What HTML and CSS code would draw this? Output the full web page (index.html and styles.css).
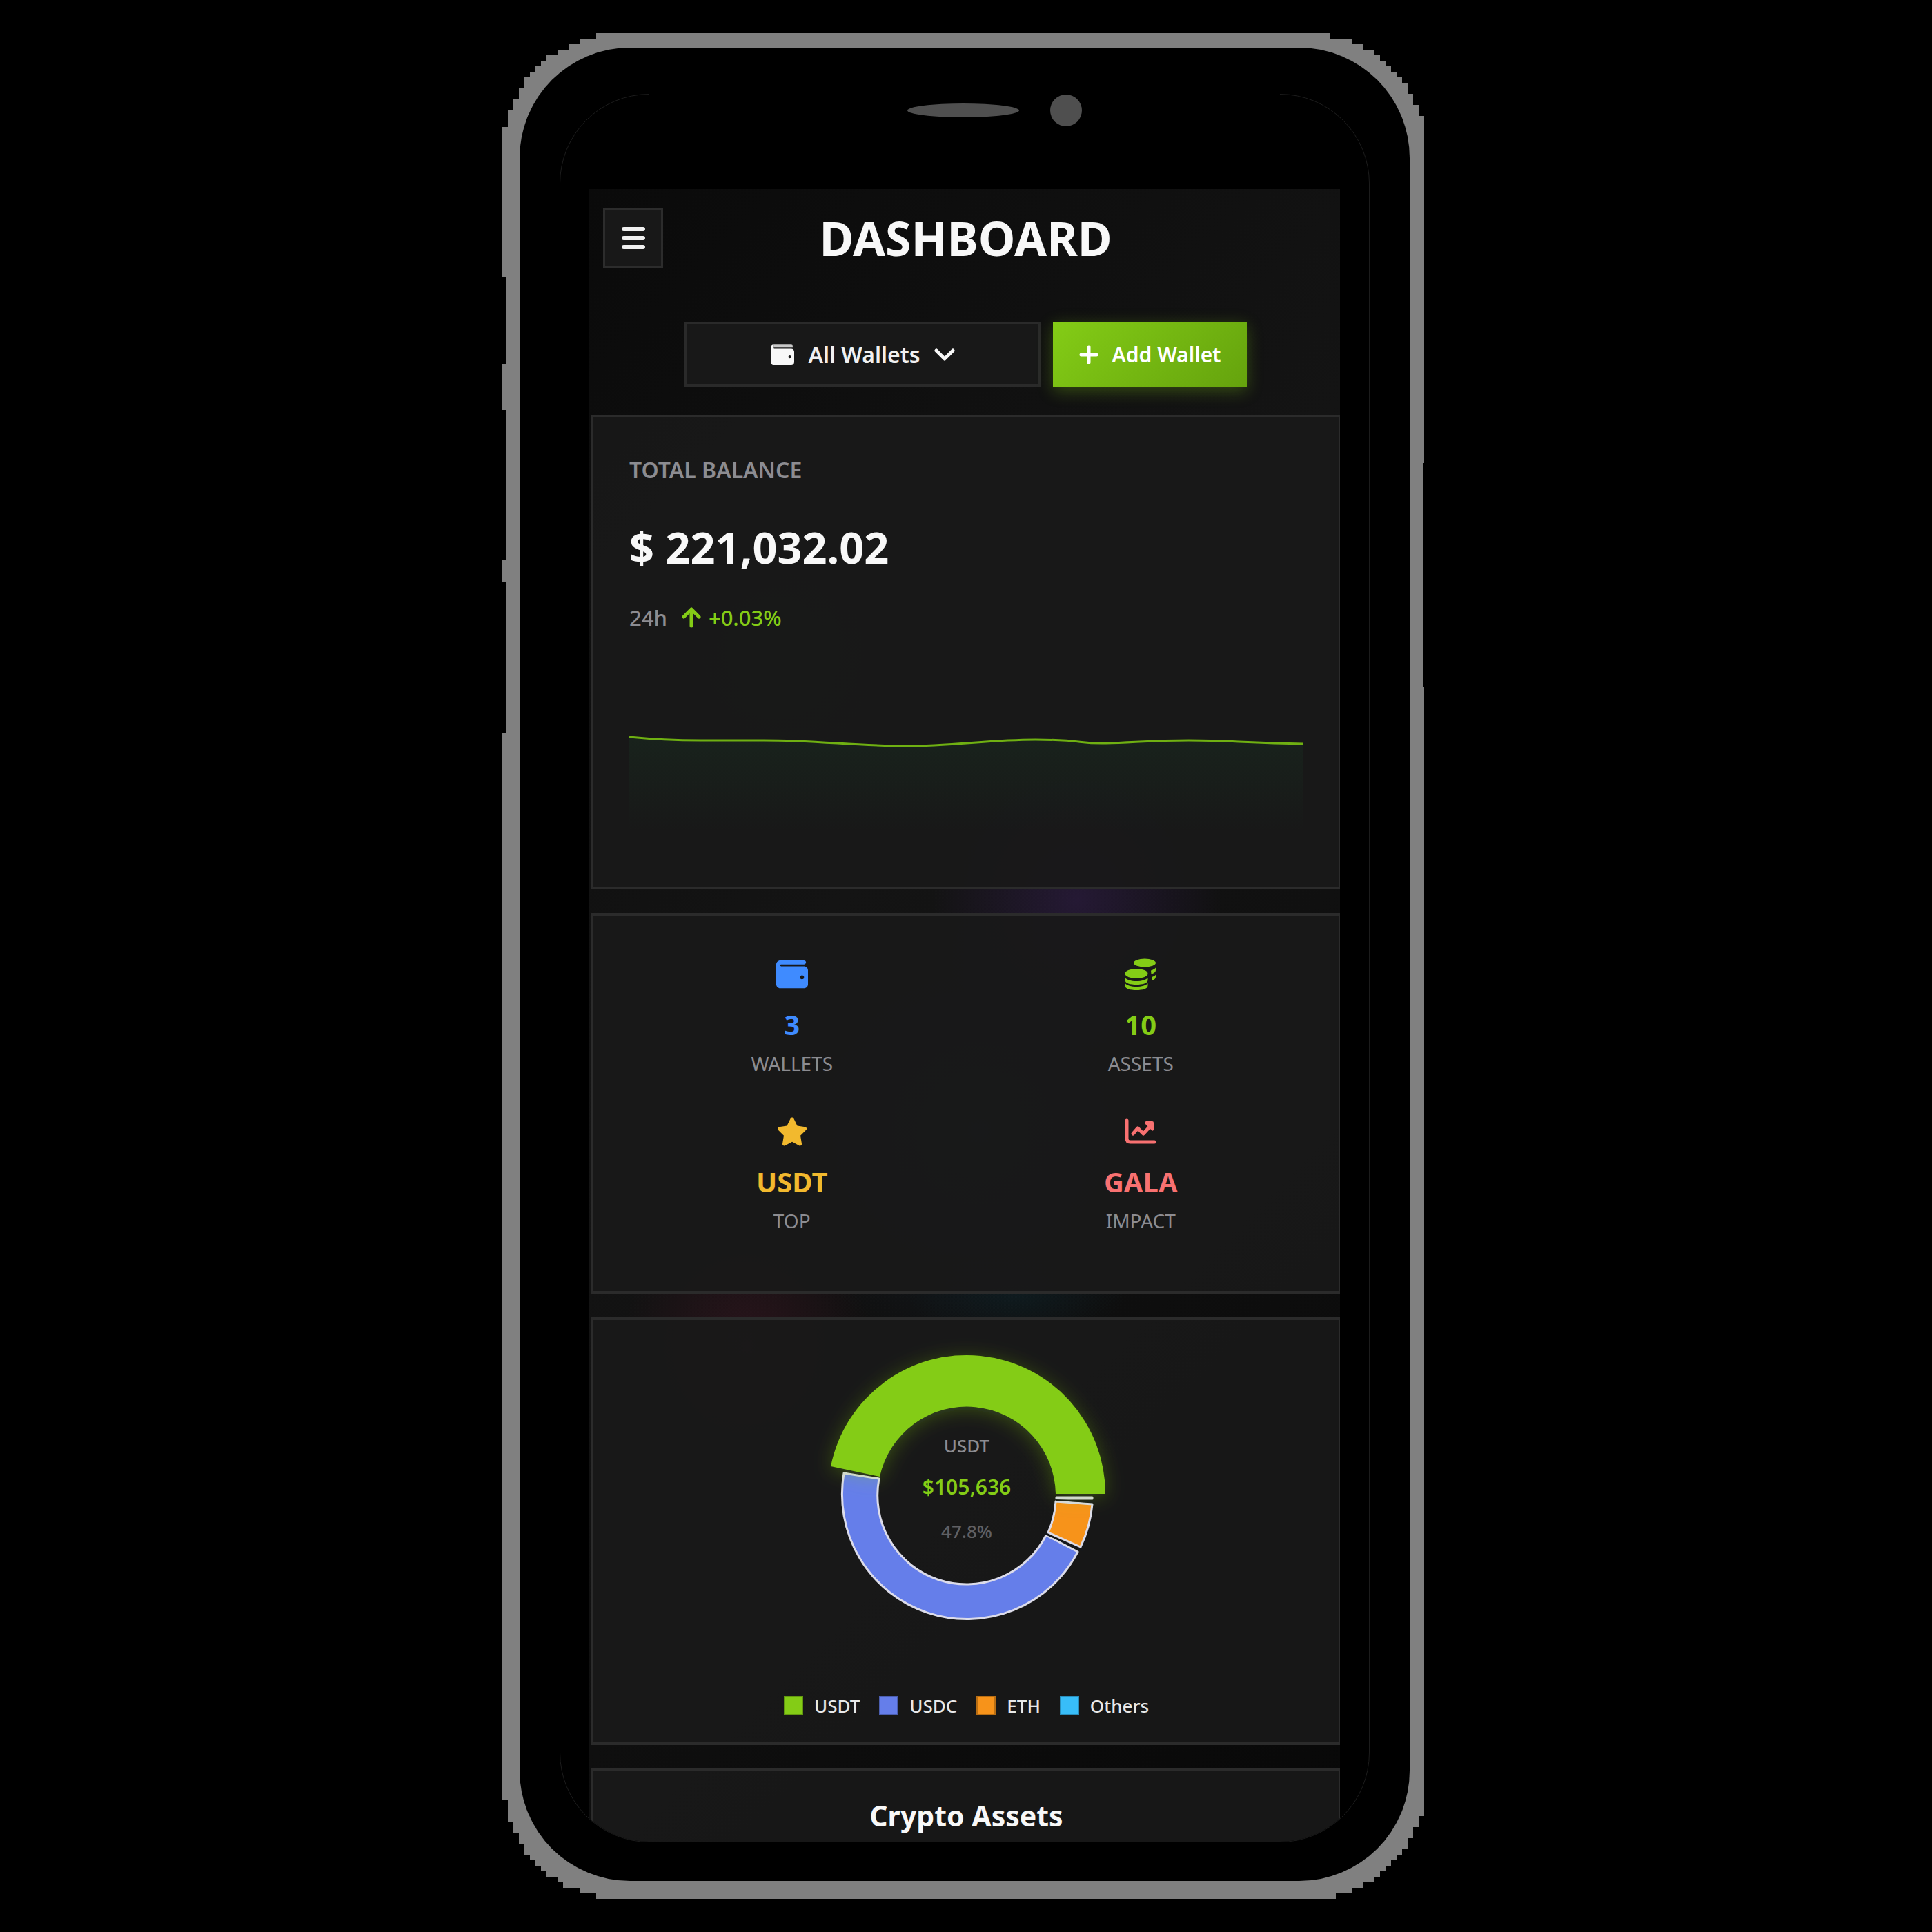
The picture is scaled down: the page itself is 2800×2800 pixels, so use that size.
FILE: index.html
```html
<!DOCTYPE html>
<html lang="en">
<head>
<meta charset="utf-8">
<meta name="viewport" content="width=device-width, initial-scale=1">
<title>Dashboard</title>
<link rel="stylesheet" href="styles.css">
</head>
<body>
<div class="phone">
  <div class="bezel">
    <div class="screen">
      <div class="sensors">
        <span class="speaker"></span>
        <span class="camera"></span>
      </div>
      <main class="app">
        <header class="topbar">
          <button class="menu-button" type="button" aria-label="Menu">
            <svg class="menu-icon" viewBox="0 0 34 32" aria-hidden="true"><path d="M3 3h28M3 16h28M3 29h28" fill="none" stroke="currentColor" stroke-width="6" stroke-linecap="round"/></svg>
          </button>
          <h1 class="title">DASHBOARD</h1>
        </header>

        <div class="actions">
          <div class="wallet-picker">
            <svg class="picker-icon" viewBox="0 0 512 512" aria-hidden="true"><path fill="#c8c8c8" d="M64 32h384c18 0 32 14 32 32v30H64z"/><path fill="currentColor" d="M64 32C28.700 32 0 60.700 0 96V416c0 35.300 28.700 64 64 64H448c35.300 0 64-28.700 64-64V192c0-35.300-28.700-64-64-64H80c-8.800 0-16-7.200-16-16V32zM416 272a32 32 0 1 1 0 64 32 32 0 1 1 0-64z"/></svg>
            <select class="picker-select" aria-label="Wallet">
              <option>All Wallets</option>
            </select>
            <svg class="chevron" viewBox="0 0 30 20" aria-hidden="true"><path d="M3 4l12 12L27 4" fill="none" stroke="currentColor" stroke-width="5" stroke-linecap="round" stroke-linejoin="round"/></svg>
          </div>
          <button class="add-button" type="button">
            <svg class="plus" viewBox="0 0 28 28" aria-hidden="true"><path d="M14 3v22M3 14h22" fill="none" stroke="currentColor" stroke-width="5" stroke-linecap="round"/></svg>
            <span>Add Wallet</span>
          </button>
        </div>

        <section class="card balance">
          <h2 class="balance-label">TOTAL BALANCE</h2>
          <p class="balance-value">$ 221,032.02</p>
          <p class="change">
            <span>24h</span>
            <span class="change-value">
              <svg class="arrow" viewBox="0 0 30 30" aria-hidden="true"><path d="M15 27V4M4 14L15 3l11 11" fill="none" stroke="currentColor" stroke-width="5" stroke-linecap="round" stroke-linejoin="round"/></svg>
              +0.03%
            </span>
          </p>
          <svg class="trend" viewBox="0 0 976 267" preserveAspectRatio="none" role="img" aria-label="Balance over time">
            <defs>
              <linearGradient id="trend-fill" x1="0" y1="0" x2="0" y2="1">
                <stop offset="0" stop-color="#22c55e" stop-opacity=".06"/>
                <stop offset="1" stop-color="#22c55e" stop-opacity="0"/>
              </linearGradient>
            </defs>
            <path fill="url(#trend-fill)" d="M0 102C40 106 70 107 104 107H195C270 107 330 115 400 115S520 106 588 106S650 112 690 111S760 107 810 107S900 111 976 112V240H0z"/>
            <path fill="none" stroke="#6fb012" stroke-width="3" d="M0 102C40 106 70 107 104 107H195C270 107 330 115 400 115S520 106 588 106S650 112 690 111S760 107 810 107S900 111 976 112"/>
          </svg>
        </section>

        <section class="card stats">
          <div class="stat stat-blue">
            <svg class="stat-icon" viewBox="0 0 512 512" aria-hidden="true"><path fill="currentColor" d="M64 32C28.700 32 0 60.700 0 96V416c0 35.300 28.700 64 64 64H448c35.300 0 64-28.700 64-64V192c0-35.300-28.700-64-64-64H80c-8.800 0-16-7.200-16-16s7.200-16 16-16H448c17.700 0 32-14.300 32-32s-14.300-32-32-32H64zM416 272a32 32 0 1 1 0 64 32 32 0 1 1 0-64z"/></svg>
            <strong class="stat-value">3</strong>
            <span class="stat-label">WALLETS</span>
          </div>
          <div class="stat stat-green">
            <svg class="stat-icon" viewBox="0 0 46 46" aria-hidden="true">
              <g fill="currentColor">
                <ellipse cx="29" cy="6.500" rx="16" ry="6"/>
                <path d="M38 17.500c3-1 5.500-2.200 7-4v3.500c0 2.800-2.800 4.600-6.500 5.700zM39.500 27c2.400-.8 4.300-1.900 5.500-3.200v3c0 2.500-2.300 4.300-5.500 5.400z"/>
                <ellipse cx="17" cy="22" rx="16.500" ry="7"/>
                <path d="M.5 28c3 3.500 9 5 16.500 5s13.500-1.500 16.500-5v3.500c0 4.500-7.500 6.500-16.500 6.500S.5 36 .5 31.500z"/>
                <path d="M.5 36c3 3.500 9 5 16.500 5s13.500-1.500 16.500-5v3.500c0 4.500-7.500 6.500-16.500 6.500S.5 44 .5 39.500z"/>
              </g>
            </svg>
            <strong class="stat-value">10</strong>
            <span class="stat-label">ASSETS</span>
          </div>
          <div class="stat stat-amber">
            <svg class="stat-icon" viewBox="0 0 576 512" aria-hidden="true"><path fill="currentColor" d="M316.900 18C311.600 7 300.400 0 288.100 0s-23.400 7-28.800 18L195 150.300 51.400 171.500c-12 1.800-22 10.200-25.700 21.700s-.7 24.200 7.900 32.700L137.800 329 113.200 474.700c-2 12 3 24.200 12.900 31.300s23 8 33.800 2.300l128.300-68.500 128.300 68.500c10.800 5.700 23.900 4.900 33.800-2.300s14.900-19.300 12.900-31.300L438.500 329 542.700 225.900c8.600-8.500 11.700-21.200 7.900-32.700s-13.700-19.900-25.700-21.700L381.200 150.300 316.900 18z"/></svg>
            <strong class="stat-value">USDT</strong>
            <span class="stat-label">TOP</span>
          </div>
          <div class="stat stat-red">
            <svg class="stat-icon" viewBox="0 0 46 46" aria-hidden="true">
              <path d="M3 7v26q0 5 5 5h35" fill="none" stroke="currentColor" stroke-width="5" stroke-linecap="round"/>
              <path d="M12 26l7-8 8 8L38 14" fill="none" stroke="currentColor" stroke-width="5" stroke-linecap="round" stroke-linejoin="round"/>
              <path d="M31 8h9q2 0 2 2v10q-1 3-3 1l-9-9q-2-3 1-4z" fill="currentColor"/>
            </svg>
            <strong class="stat-value">GALA</strong>
            <span class="stat-label">IMPACT</span>
          </div>
        </section>

        <section class="card allocation">
          <svg class="donut" viewBox="-239 -239 478 478" role="img" aria-label="Allocation by asset">
            <defs>
              <filter id="glow" x="-30%" y="-30%" width="160%" height="170%">
                <feDropShadow dx="0" dy="4" stdDeviation="14" flood-color="#84cc16" flood-opacity=".3"/>
              </filter>
            </defs>
            <g stroke="#dcdcea" stroke-width="3" stroke-linejoin="round">
              <path fill="#657eea" d="M-178 -31A181 181 0 0 0 161 83L115 59A129 129 0 0 1 -127 -23z"/>
              <path fill="#f7931a" d="M182 14A182 182 0 0 1 165 76L118 55A129 129 0 0 0 129 10z"/>
              <path fill="#dcdcea" d="M130 4H182V6H130z"/>
            </g>
            <path fill="none" stroke="#15181c" stroke-width="2" d="M129 8L184 11M114 57L168 81"/>
            <path fill="#84cc16" filter="url(#glow)" d="M201 -1A201 201 0 0 0 -197 -41L-126 -26A129 129 0 0 1 129 -1z"/>
            <text class="donut-name" x="0" y="-61">USDT</text>
            <text class="donut-value" x="0" y="0">$105,636</text>
            <text class="donut-share" x="0" y="63">47.8%</text>
          </svg>
          <ul class="legend">
            <li class="legend-item"><span class="swatch swatch-usdt"></span>USDT</li>
            <li class="legend-item"><span class="swatch swatch-usdc"></span>USDC</li>
            <li class="legend-item"><span class="swatch swatch-eth"></span>ETH</li>
            <li class="legend-item"><span class="swatch swatch-others"></span>Others</li>
          </ul>
        </section>

        <section class="card assets">
          <h2 class="assets-title">Crypto Assets</h2>
        </section>
      </main>
    </div>
  </div>
</div>
</body>
</html>
```
FILE: styles.css
```css
* { box-sizing: border-box; }

body {
  margin: 0;
  padding: 48px 8px 48px 0;
  background: #000;
  color: #f8f8f8;
  font-family: "Noto Sans", "Open Sans", sans-serif;
}

h1, h2, p, ul { margin: 0; padding: 0; }

/* Device body: stepped outer corners and the side-button recesses. */
.phone {
  width: 100%;
  max-width: 1336px;
  margin: 0 auto;
  padding: 21px 21px 26px 25px;
  background: #808080;
  clip-path: polygon(
    136px 0, 136px 8px, 112px 8px, 112px 16px, 96px 16px, 96px 24px, 80px 24px, 80px 32px, 64px 32px, 64px 40px, 56px 40px, 56px 48px, 48px 48px, 48px 56px, 40px 56px, 40px 64px, 32px 64px, 32px 80px, 24px 80px, 24px 96px, 16px 96px, 16px 112px, 8px 112px, 8px 136px, 0 136px,
    0 354px, 5px 354px, 5px 480px, 0 480px,
    0 546px, 5px 546px, 5px 764px, 0 764px,
    0 795px, 5px 795px, 5px 1014px, 0 1014px,
    0 calc(100% - 144px), 8px calc(100% - 144px), 8px calc(100% - 112px), 16px calc(100% - 112px), 16px calc(100% - 96px), 24px calc(100% - 96px), 24px calc(100% - 80px), 32px calc(100% - 80px), 32px calc(100% - 64px), 40px calc(100% - 64px), 40px calc(100% - 56px), 48px calc(100% - 56px), 48px calc(100% - 48px), 56px calc(100% - 48px), 56px calc(100% - 40px), 64px calc(100% - 40px), 64px calc(100% - 32px), 80px calc(100% - 32px), 80px calc(100% - 24px), 88px calc(100% - 24px), 88px calc(100% - 16px), 112px calc(100% - 16px), 112px calc(100% - 8px), 136px calc(100% - 8px), 136px 100%,
    calc(100% - 128px) 100%, calc(100% - 128px) calc(100% - 8px), calc(100% - 104px) calc(100% - 8px), calc(100% - 104px) calc(100% - 16px), calc(100% - 88px) calc(100% - 16px), calc(100% - 88px) calc(100% - 24px), calc(100% - 72px) calc(100% - 24px), calc(100% - 72px) calc(100% - 32px), calc(100% - 64px) calc(100% - 32px), calc(100% - 64px) calc(100% - 40px), calc(100% - 56px) calc(100% - 40px), calc(100% - 56px) calc(100% - 48px), calc(100% - 48px) calc(100% - 48px), calc(100% - 48px) calc(100% - 56px), calc(100% - 40px) calc(100% - 56px), calc(100% - 40px) calc(100% - 64px), calc(100% - 32px) calc(100% - 64px), calc(100% - 32px) calc(100% - 72px), calc(100% - 24px) calc(100% - 72px), calc(100% - 24px) calc(100% - 88px), calc(100% - 16px) calc(100% - 88px), calc(100% - 16px) calc(100% - 104px), calc(100% - 8px) calc(100% - 104px), calc(100% - 8px) calc(100% - 120px), 100% calc(100% - 120px),
    100% 947px, calc(100% - 1px) 947px, calc(100% - 1px) 623px, 100% 623px,
    100% 120px, calc(100% - 8px) 120px, calc(100% - 8px) 104px, calc(100% - 16px) 104px, calc(100% - 16px) 88px, calc(100% - 24px) 88px, calc(100% - 24px) 72px, calc(100% - 32px) 72px, calc(100% - 32px) 64px, calc(100% - 40px) 64px, calc(100% - 40px) 56px, calc(100% - 48px) 56px, calc(100% - 48px) 48px, calc(100% - 56px) 48px, calc(100% - 56px) 40px, calc(100% - 64px) 40px, calc(100% - 64px) 32px, calc(100% - 72px) 32px, calc(100% - 72px) 24px, calc(100% - 88px) 24px, calc(100% - 88px) 16px, calc(100% - 104px) 16px, calc(100% - 104px) 8px, calc(100% - 136px) 8px, calc(100% - 136px) 0
  );
}

.bezel {
  position: relative;
  padding: 67px 58px 56px;
  border-radius: 160px;
  background: #000;
}
/* Leaves the screen outline visible only at its corners and sides. */
.bezel::before {
  content: "";
  position: absolute;
  top: 67px;
  right: 188px;
  left: 188px;
  height: 1px;
  background: #000;
}

.screen {
  overflow: hidden;
  border: 1px solid #1c1c1c;
  border-radius: 130px;
}

.sensors {
  display: grid;
  grid-template-columns: 1fr auto 1fr;
  align-items: center;
  column-gap: 45px;
  margin-bottom: 91px;
  padding-right: 4px;
}
.speaker {
  grid-column: 2;
  width: 162px;
  height: 20px;
  border-radius: 50%;
  background: #4f4f4f;
}
.camera {
  width: 46px;
  height: 46px;
  border-radius: 50%;
  background: #4f4f4f;
}

.app {
  overflow: hidden;
  margin: 0 42px;
  background:
    radial-gradient(280px 300px at 25% 28%, rgba(132, 204, 22, .08), transparent),
    radial-gradient(210px 220px at 65% 43%, rgba(130, 60, 220, .17), transparent),
    radial-gradient(320px 320px at 52% 57%, rgba(40, 130, 220, .12), transparent),
    radial-gradient(160px 60px at 57% 67%, rgba(0, 160, 180, .06), transparent),
    radial-gradient(180px 200px at 21% 70%, rgba(220, 40, 100, .12), transparent),
    linear-gradient(135deg, #0a0a0a, #141414 40%, #080808);
}

.topbar {
  display: grid;
  grid-template-columns: 87px 1fr 87px;
  padding: 28px 17px 0 20px;
}
.menu-button {
  display: grid;
  place-items: center;
  height: 86px;
  padding: 0;
  border: 3px solid #2c2c2c;
  background: #181818;
  color: #f0f0f0;
}
.menu-icon { width: 34px; height: 32px; }
.title {
  font-size: 68px;
  line-height: 86px;
  font-weight: 700;
  text-align: center;
}

.actions {
  display: flex;
  justify-content: center;
  gap: 17px;
  padding: 78px 17px 40px 20px;
}
.wallet-picker {
  display: flex;
  align-items: center;
  justify-content: center;
  gap: 20px;
  width: 517px;
  height: 95px;
  border: 4px solid #2a2a2a;
  background: #181818;
}
.picker-icon { width: 34px; height: 34px; }
.picker-select {
  appearance: none;
  field-sizing: content;
  padding: 0;
  border: 0;
  background: transparent;
  color: #f0f0f0;
  font: 600 32px/48px "Noto Sans", "Open Sans", sans-serif;
}
.chevron { width: 30px; height: 20px; }
.add-button {
  display: flex;
  align-items: center;
  justify-content: center;
  gap: 20px;
  width: 281px;
  height: 95px;
  padding: 0;
  border: 0;
  background: linear-gradient(135deg, #84cc16, #65a30d);
  box-shadow: 0 6px 22px rgba(132, 204, 22, .3);
  color: #fff;
  font: 600 30px/48px "Noto Sans", "Open Sans", sans-serif;
}
.plus { width: 28px; height: 28px; }

/* Cards run slightly past the right edge of the app area. */
.card {
  margin: 0 -3px 34px 2px;
  padding: 52px;
  border: 4px solid #2b2b2b;
  background: rgba(25, 25, 25, .93);
}

.balance-label {
  color: #8c8c91;
  font-size: 32px;
  line-height: 48px;
  font-weight: 600;
}
.balance-value {
  margin-top: 44px;
  font-size: 63px;
  line-height: 88px;
  font-weight: 700;
}
.change {
  display: flex;
  gap: 20px;
  margin-top: 34px;
  color: #8c8c91;
  font-size: 31px;
  line-height: 48px;
  font-weight: 500;
}
.change-value {
  display: flex;
  align-items: center;
  gap: 10px;
  color: #84cc16;
}
.arrow { width: 30px; height: 30px; }
.trend {
  display: block;
  width: 100%;
  height: 267px;
  margin-top: 47px;
}

.stats {
  display: grid;
  grid-template-columns: 1fr 1fr;
  gap: 46px 34px;
  padding-bottom: 82px;
}
.stat {
  display: flex;
  flex-direction: column;
  align-items: center;
}
.stat-icon {
  width: 46px;
  height: 46px;
  margin: 10px 0 22px;
}
.stat-value {
  font-size: 40px;
  line-height: 56px;
  font-weight: 700;
}
.stat-label {
  margin-top: 8px;
  color: #8c8c91;
  font-size: 28px;
  line-height: 40px;
}
.stat-blue { color: #3f8bff; }
.stat-green { color: #84cc16; }
.stat-amber { color: #f2b92e; }
.stat-red { color: #f87171; }

.allocation { padding: 14px 52px 33px; }
.donut {
  display: block;
  width: 478px;
  height: 478px;
  margin: 0 auto;
}
.donut text { text-anchor: middle; }
.donut-name { fill: #8c8c91; font-size: 26px; font-weight: 500; }
.donut-value { fill: #84cc16; font-size: 30px; font-weight: 600; }
.donut-share { fill: #606064; font-size: 26px; font-weight: 500; }
.legend {
  display: flex;
  justify-content: center;
  gap: 28px;
  margin-top: 47px;
  list-style: none;
}
.legend-item {
  display: flex;
  align-items: center;
  gap: 16px;
  font-size: 26px;
  line-height: 40px;
  font-weight: 500;
  color: #e8e8e8;
}
.swatch {
  width: 28px;
  height: 28px;
  border: 2px solid rgba(0, 0, 0, .25);
}
.swatch-usdt { background-color: #84cc16; }
.swatch-usdc { background-color: #657eea; }
.swatch-eth { background-color: #f7931a; }
.swatch-others { background-color: #38bdf8; }

.assets {
  margin-bottom: 0;
  padding: 32px 52px 6px;
  border-bottom: 0;
}
.assets-title {
  font-size: 41px;
  line-height: 64px;
  font-weight: 700;
  text-align: center;
}
```
